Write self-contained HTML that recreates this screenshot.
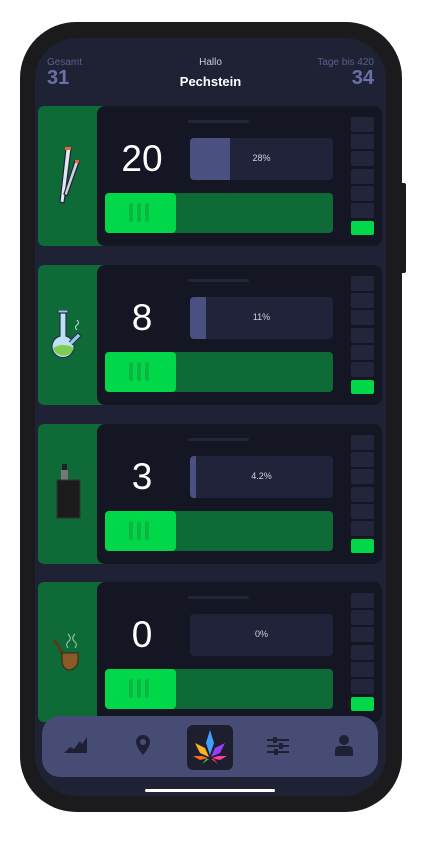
<!DOCTYPE html>
<html><head><meta charset="utf-8"><style>
*{margin:0;padding:0;box-sizing:border-box}
body{width:421px;height:854px;background:#fff;position:relative;overflow:hidden;font-family:"Liberation Sans",sans-serif}
.frame{position:absolute;left:20px;top:22px;width:382px;height:790px;background:#1b1b1d;border-radius:56px}
.btn{position:absolute;left:400px;top:183px;width:6px;height:90px;background:#1b1b1d;border-radius:2px}
.screen{position:absolute;left:35px;top:38px;width:351px;height:758px;background:#1f2235;border-radius:42px;overflow:hidden}
.abs{position:absolute}
.lbl{color:#5a5f8c;font-size:10px}
.big{color:#6a70a8;font-size:20px;font-weight:bold}
.card{position:absolute;left:3px;width:344px;height:140px}
.gp{position:absolute;left:0;top:0;width:80px;height:140px;background:#0e6a36;border-radius:6px}
.dk{position:absolute;left:59px;top:0;width:285px;height:140px;background:#141623;border-radius:8px}
.num{position:absolute;left:59px;width:90px;top:32px;text-align:center;color:#fff;font-size:37px}
.hd{position:absolute;left:150px;top:14px;width:61px;height:3px;background:#23263a;border-radius:2px}
.pb{position:absolute;left:152px;top:32px;width:143px;height:42px;background:#20233a;border-radius:4px;overflow:hidden}
.pf{position:absolute;left:0;top:0;height:42px;background:#4a5080}
.pt{position:absolute;left:0;width:143px;top:15px;text-align:center;color:#d0d2e0;font-size:9px}
.sl{position:absolute;left:67px;top:87px;width:228px;height:40px;background:#0e6a36;border-radius:4px}
.sk{position:absolute;left:0;top:0;width:71px;height:40px;background:#00d84a;border-radius:4px}
.sk i{position:absolute;top:10px;width:4px;height:19px;background:#0bb642;border-radius:2px}
.sq{position:absolute;left:313px;width:23px;height:15px;background:#23263a;border-radius:2px}
.nav{position:absolute;left:7px;top:678px;width:336px;height:61px;background:#474c75;border-radius:18px}
.home{position:absolute;left:110px;top:751px;width:130px;height:3px;background:#fff;border-radius:2px}
</style></head><body>
<div class="frame"></div><div class="btn"></div>
<div class="screen">
<div class="abs lbl" style="left:12px;top:19px">Gesamt</div>
<div class="abs big" style="left:12px;top:29px">31</div>
<div class="abs lbl" style="left:0;width:351px;text-align:center;top:19px;color:#c8cadc">Hallo</div>
<div class="abs" style="left:0;width:351px;text-align:center;top:36px;color:#fff;font-weight:bold;font-size:13px">Pechstein</div>
<div class="abs lbl" style="right:12px;top:19px">Tage bis 420</div>
<div class="abs big" style="right:12px;top:29px">34</div>

<div class="card" style="top:68px"><div class="gp"></div><div class="dk"></div>
<svg class="abs" style="left:18px;top:40px" width="30" height="60" viewBox="0 0 30 60"><path d="M10 2 L15 3 L8 57 L4 56Z" fill="#dfe7f2" stroke="#223" stroke-width="1.2"/><path d="M19 15 L23 16 L11 50 L8 48Z" fill="#c9d3e3" stroke="#223" stroke-width="1.2"/><rect x="9" y="1" width="6" height="3" fill="#e8643a"/><rect x="19" y="14" width="4" height="3" fill="#e8643a"/></svg>
<div class="hd"></div><div class="num">20</div>
<div class="pb"><div class="pf" style="width:40px"></div><div class="pt">28%</div></div>
<div class="sl"><div class="sk"><i style="left:24px"></i><i style="left:32px"></i><i style="left:40px"></i></div></div>
<div class="sq" style="top:11px"></div><div class="sq" style="top:28px"></div><div class="sq" style="top:45px"></div><div class="sq" style="top:63px"></div><div class="sq" style="top:80px"></div><div class="sq" style="top:97px"></div><div class="sq" style="top:115px;background:#00d84a;height:14px"></div>
</div>

<div class="card" style="top:227px"><div class="gp"></div><div class="dk"></div>
<svg class="abs" style="left:13px;top:45px" width="32" height="52" viewBox="0 0 32 52"><rect x="7" y="0" width="10" height="3" fill="#9cc6f0" stroke="#234" stroke-width="1"/><path d="M9 3 H15 V26 A11 11 0 1 1 9 26Z" fill="#bfe0f5" stroke="#234" stroke-width="1.2"/><path d="M2 38 Q12 32 23 38 A11 11 0 0 1 2 38Z" fill="#7ccf4e"/><path d="M18 32 L27 23 L30 26 L21 35" fill="#9cc6f0" stroke="#234" stroke-width="1"/><path d="M26 20 q-3 -3 0 -5 q3 -2 0 -5" stroke="#cde" fill="none" stroke-width="1"/></svg>
<div class="hd"></div><div class="num">8</div>
<div class="pb"><div class="pf" style="width:16px"></div><div class="pt">11%</div></div>
<div class="sl"><div class="sk"><i style="left:24px"></i><i style="left:32px"></i><i style="left:40px"></i></div></div>
<div class="sq" style="top:11px"></div><div class="sq" style="top:28px"></div><div class="sq" style="top:45px"></div><div class="sq" style="top:63px"></div><div class="sq" style="top:80px"></div><div class="sq" style="top:97px"></div><div class="sq" style="top:115px;background:#00d84a;height:14px"></div>
</div>

<div class="card" style="top:386px"><div class="gp"></div><div class="dk"></div>
<svg class="abs" style="left:16px;top:40px" width="28" height="58" viewBox="0 0 28 58"><rect x="8" y="0" width="5" height="6" fill="#222"/><rect x="7" y="6" width="7" height="10" fill="#777"/><rect x="3" y="16" width="23" height="38" fill="#1c1c1c" stroke="#333"/></svg>
<div class="hd"></div><div class="num">3</div>
<div class="pb"><div class="pf" style="width:6px"></div><div class="pt">4.2%</div></div>
<div class="sl"><div class="sk"><i style="left:24px"></i><i style="left:32px"></i><i style="left:40px"></i></div></div>
<div class="sq" style="top:11px"></div><div class="sq" style="top:28px"></div><div class="sq" style="top:45px"></div><div class="sq" style="top:63px"></div><div class="sq" style="top:80px"></div><div class="sq" style="top:97px"></div><div class="sq" style="top:115px;background:#00d84a;height:14px"></div>
</div>

<div class="card" style="top:544px"><div class="gp"></div><div class="dk"></div>
<svg class="abs" style="left:12px;top:44px" width="34" height="46" viewBox="0 0 34 46"><path d="M3 14 Q8 16 12 28" stroke="#5a3a1e" stroke-width="3" fill="none"/><path d="M12 27 H28 V36 Q26 44 18 44 Q12 42 12 34Z" fill="#8a5a2b" stroke="#3b2410"/><path d="M18 22 q-3 -4 1 -7 q3 -3 -1 -7 M25 22 q3 -4 -1 -7 q-3 -3 1 -7" stroke="#9cb" fill="none" stroke-width="1"/></svg>
<div class="hd"></div><div class="num">0</div>
<div class="pb"><div class="pt">0%</div></div>
<div class="sl"><div class="sk"><i style="left:24px"></i><i style="left:32px"></i><i style="left:40px"></i></div></div>
<div class="sq" style="top:11px"></div><div class="sq" style="top:28px"></div><div class="sq" style="top:45px"></div><div class="sq" style="top:63px"></div><div class="sq" style="top:80px"></div><div class="sq" style="top:97px"></div><div class="sq" style="top:115px;background:#00d84a;height:14px"></div>
</div>

<div class="nav">
<svg class="abs" style="left:22px;top:19px" width="24" height="20" viewBox="0 0 24 20"><path d="M0 18 L6 12 L10 14 L16 6 L18 9 L23 2 V18Z" fill="#1e2133"/></svg>
<svg class="abs" style="left:93px;top:19px" width="16" height="22" viewBox="0 0 16 22"><path d="M8 0 A7 7 0 0 1 15 7 C15 12 8 20 8 20 C8 20 1 12 1 7 A7 7 0 0 1 8 0Z M8 4 A3 3 0 1 0 8.01 4Z" fill="#1e2133" fill-rule="evenodd"/></svg>
<div class="abs" style="left:145px;top:9px;width:46px;height:45px;background:#1d1f2e;border-radius:6px"></div>
<svg class="abs" style="left:150px;top:13px" width="36" height="38" viewBox="0 0 36 38"><path d="M18 1 L22 14 L18 26 L14 14Z" fill="#3fa0ff"/><path d="M3 14 L13 19 L17 28 L8 24Z" fill="#ffb21f"/><path d="M33 14 L23 19 L19 28 L28 24Z" fill="#9a3cff"/><path d="M1 27 L10 27 L16 29 L8 31Z" fill="#ff6a1a"/><path d="M35 27 L26 27 L20 29 L28 31Z" fill="#ff3ca0"/><path d="M10 35 L14 30 L17 30 Z" fill="#2ad04a"/><path d="M26 35 L22 30 L19 30Z" fill="#ff2a4a"/></svg>
<svg class="abs" style="left:225px;top:20px" width="22" height="20" viewBox="0 0 22 20"><g fill="#1e2133"><rect y="3" width="22" height="2"/><rect y="9" width="22" height="2"/><rect y="15" width="22" height="2"/><rect x="6" y="1" width="4" height="6"/><rect x="12" y="7" width="4" height="6"/><rect x="7" y="13" width="4" height="6"/></g></svg>
<svg class="abs" style="left:293px;top:19px" width="18" height="22" viewBox="0 0 18 22"><circle cx="9" cy="5" r="5" fill="#1e2133"/><path d="M0 21 V16 Q0 11 5 11 H13 Q18 11 18 16 V21Z" fill="#1e2133"/></svg>
</div>
<div class="home"></div>
</div>
</body></html>
